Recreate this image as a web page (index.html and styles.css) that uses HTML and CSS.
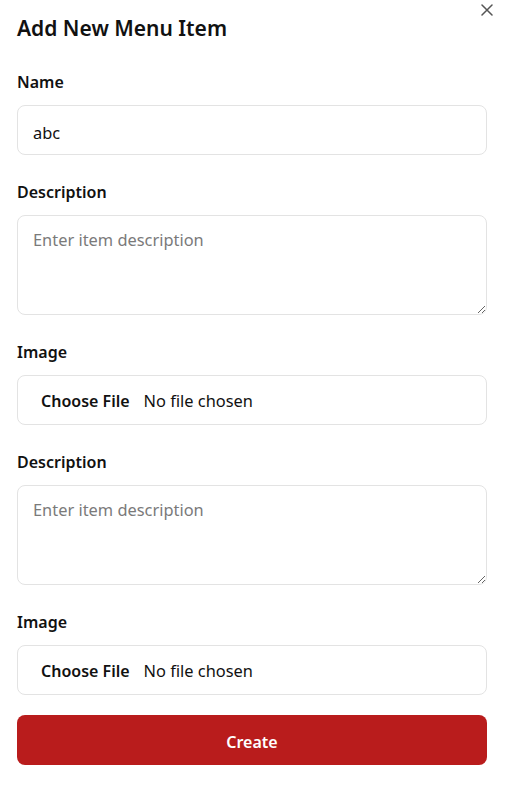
FILE: index.html
```html
<!DOCTYPE html>
<html lang="en">
<head>
<meta charset="utf-8">
<title>Add New Menu Item</title>
<link rel="stylesheet" href="styles.css">
</head>
<body>
<div class="dialog">
  <button class="close" type="button" aria-label="Close">
    <svg width="12" height="12" viewBox="0 0 12 12" fill="none" stroke="currentColor" stroke-width="1.5" stroke-linecap="round"><path d="M1 1L11 11M11 1L1 11"/></svg>
  </button>
  <h2 class="title">Add New Menu Item</h2>
  <form class="form">
    <div class="field">
      <label class="label" for="name">Name</label>
      <input class="input" id="name" type="text" value="abc">
    </div>
    <div class="field">
      <label class="label" for="desc1">Description</label>
      <textarea class="input textarea" id="desc1" placeholder="Enter item description"></textarea>
    </div>
    <div class="field">
      <label class="label" for="img1">Image</label>
      <input class="input file" id="img1" type="file">
    </div>
    <div class="field">
      <label class="label" for="desc2">Description</label>
      <textarea class="input textarea" id="desc2" placeholder="Enter item description"></textarea>
    </div>
    <div class="field">
      <label class="label" for="img2">Image</label>
      <input class="input file" id="img2" type="file">
    </div>
    <button class="submit" type="button">Create</button>
  </form>
</div>
</body>
</html>
```
FILE: styles.css
```css
* { box-sizing: border-box; }
html, body { margin: 0; padding: 0; background: #fff; }
body {
  font-family: "Noto Sans", "Open Sans", sans-serif;
  color: #111;
}
.dialog {
  position: relative;
  padding: 14px 26px 28px 17px;
}
.close {
  position: absolute;
  top: 4px;
  right: 20px;
  width: 12px;
  height: 12px;
  padding: 0;
  border: none;
  background: none;
  color: #555;
  display: flex;
}
.title {
  margin: 0 0 27px;
  font-size: 21px;
  line-height: 28px;
  font-weight: 600;
}
.form {
  display: flex;
  flex-direction: column;
  gap: 24px;
}
.field {
  display: flex;
  flex-direction: column;
  gap: 12px;
}
.label {
  font-size: 16px;
  padding-top: 2px;
  line-height: 22px;
  font-weight: 600;
}
.input {
  width: 100%;
  height: 50px;
  border: 1px solid #e3e3e3;
  border-radius: 8px;
  padding: 4px 15px 0;
  font-family: inherit;
  font-size: 16.4px;
  color: #111;
  background: #fff;
  outline: none;
}
.textarea {
  height: 100px;
  padding: 12px 15px;
  line-height: 24px;
  resize: vertical;
  display: block;
}
.textarea::placeholder { color: #7a7a7a; }
.file {
  padding: 2px 15px 0 8px;
  line-height: 46px;
}
.file::file-selector-button {
  font-family: inherit;
  font-size: 16px;
  font-weight: 600;
  color: #111;
  border: none;
  background: none;
  padding: 0 8px 0 15px;
  margin-right: 6px;
}
.submit {
  margin-top: -4px;
  height: 50px;
  padding-top: 4px;
  border: none;
  border-radius: 8px;
  background: #b91c1c;
  color: #fff;
  font-family: inherit;
  font-size: 16px;
  font-weight: 600;
}
```
